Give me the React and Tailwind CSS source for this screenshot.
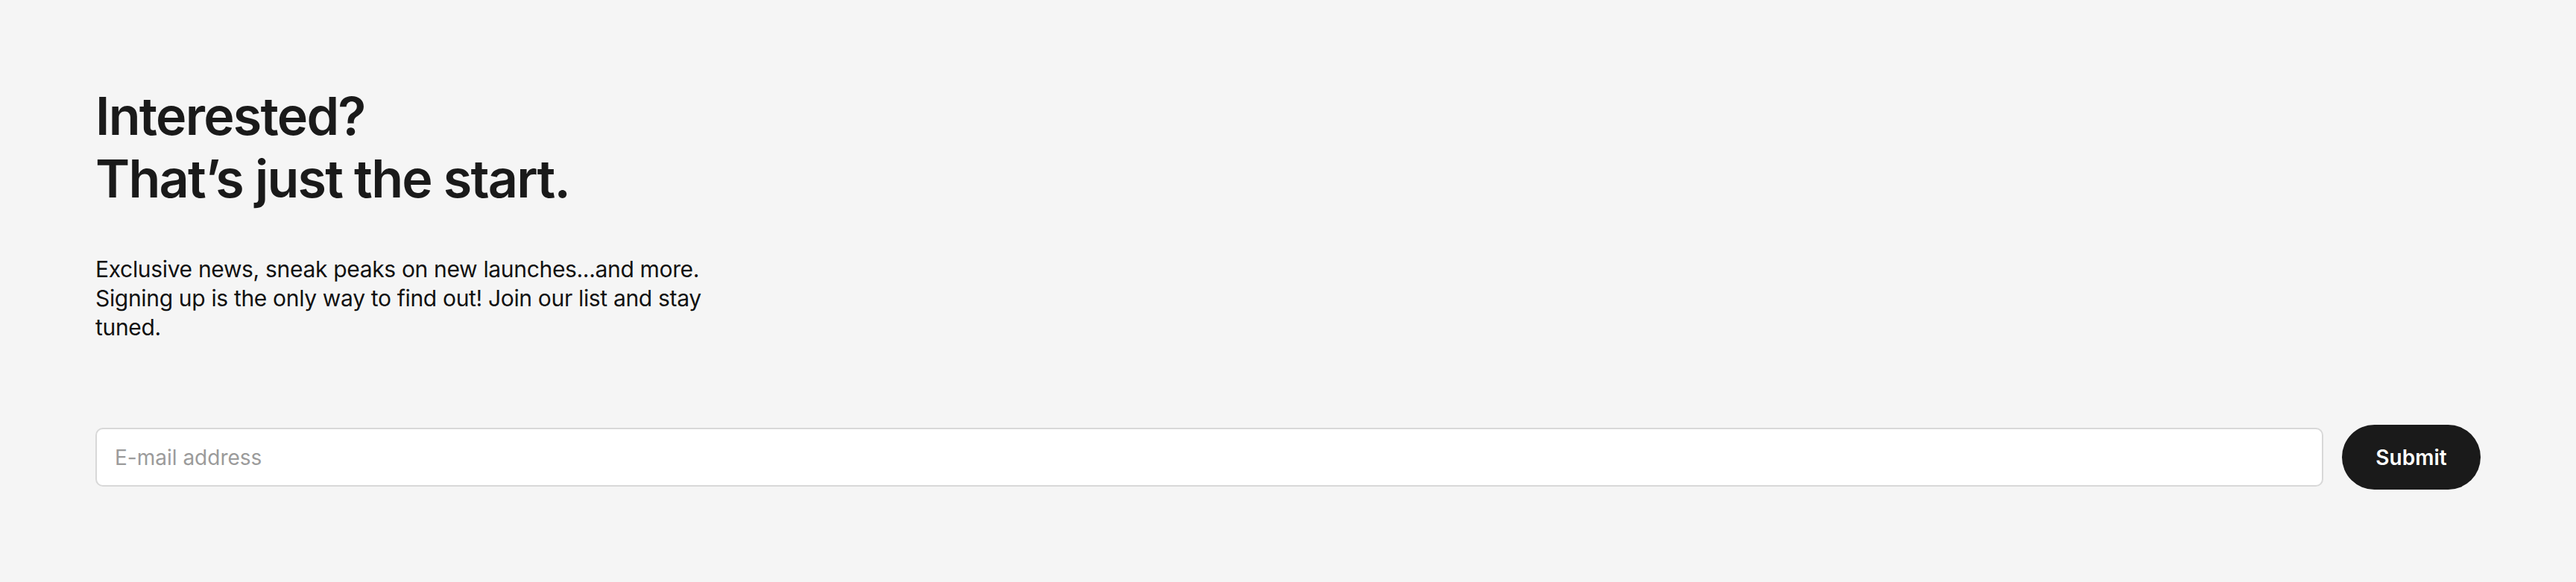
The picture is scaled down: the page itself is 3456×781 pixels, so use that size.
export default function App() {
  return (
    <div className="min-h-[781px] w-full bg-[#f5f5f5] font-['Inter',sans-serif] text-[#1a1a1a]">
      <section className="px-[128px] pt-[114px] pb-[123px]">
        <h1 className="text-[70px] leading-[84px] font-semibold tracking-[-0.025em]">
          Interested?
          <br />
          That’s just the start.
        </h1>

        <p className="mt-[60px] max-w-[850px] text-[30px] leading-[39px] tracking-[-0.33px] text-[#111]">
          Exclusive news, sneak peaks on new launches...and more. Signing up is the only way to find out! Join our
          list and stay tuned.
        </p>

        <form
          className="mt-[111px] flex items-center gap-[25px]"
          onSubmit={(e) => e.preventDefault()}
        >
          <input
            type="email"
            placeholder="E-mail address"
            className="h-[79px] flex-1 rounded-[10px] border-2 border-[#d8d8d8] bg-white px-[24px] text-[28px] outline-none placeholder:text-[#9b9b9b]"
          />
          <button
            type="submit"
            className="h-[87px] w-[186px] rounded-full bg-[#1a1a1a] text-[28px] font-semibold text-white"
          >
            Submit
          </button>
        </form>
      </section>
    </div>
  );
}
